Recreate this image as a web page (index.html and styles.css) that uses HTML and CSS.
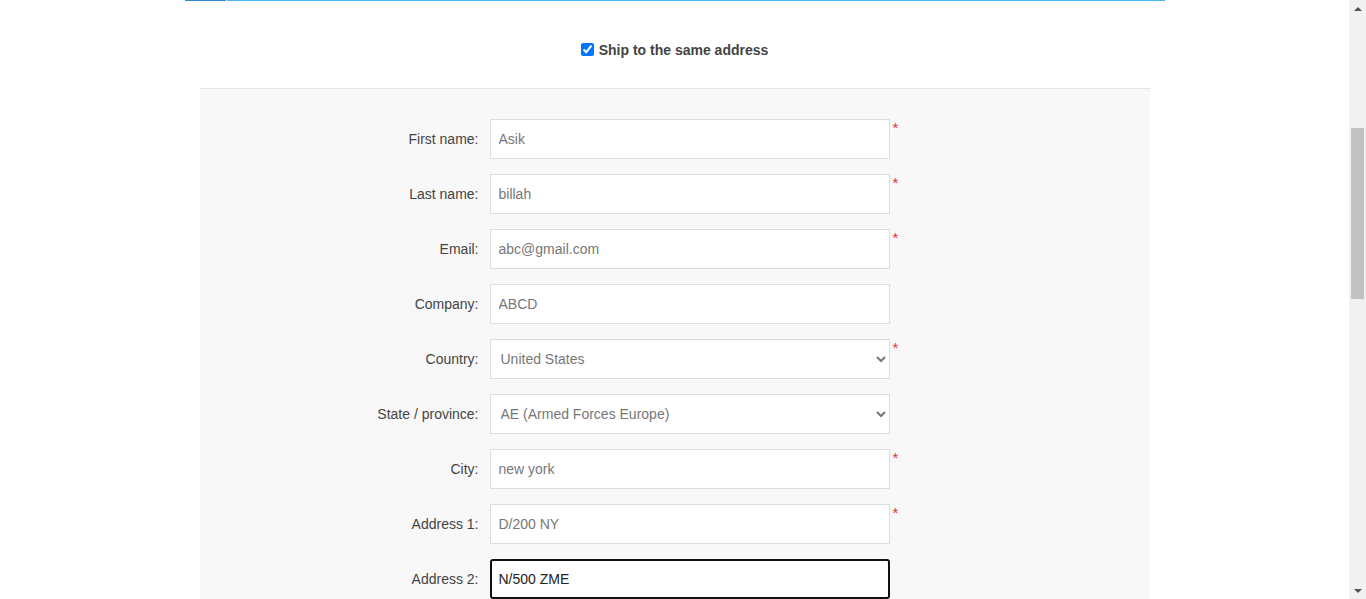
FILE: index.html
```html
<!DOCTYPE html>
<html lang="en">
<head>
<meta charset="utf-8">
<title>Checkout - Shipping address</title>
<link rel="stylesheet" href="styles.css">
</head>
<body>
<div class="page">
  <div class="intro">
    <h1 class="title">Checkout</h1>
  </div>
  <div class="tabbar">
    <div class="tab tab-active"></div>
    <div class="tab tab-rest"></div>
  </div>
  <div class="ship">
    <input type="checkbox" id="same" class="ship-check" checked>
    <label for="same" class="ship-label">Ship to the same address</label>
  </div>
  <div class="section">
    <div class="row">
      <label class="lbl">First name:</label>
      <input class="field" type="text" value="Asik">
      <span class="req">*</span>
    </div>
    <div class="row">
      <label class="lbl">Last name:</label>
      <input class="field" type="text" value="billah">
      <span class="req">*</span>
    </div>
    <div class="row">
      <label class="lbl">Email:</label>
      <input class="field" type="text" value="abc@gmail.com">
      <span class="req">*</span>
    </div>
    <div class="row">
      <label class="lbl">Company:</label>
      <input class="field" type="text" value="ABCD">
    </div>
    <div class="row">
      <label class="lbl">Country:</label>
      <select class="field select"><option>United States</option></select>
      <span class="req">*</span>
    </div>
    <div class="row">
      <label class="lbl">State / province:</label>
      <select class="field select"><option>AE (Armed Forces Europe)</option></select>
    </div>
    <div class="row">
      <label class="lbl">City:</label>
      <input class="field" type="text" value="new york">
      <span class="req">*</span>
    </div>
    <div class="row">
      <label class="lbl">Address 1:</label>
      <input class="field" type="text" value="D/200 NY">
      <span class="req">*</span>
    </div>
    <div class="row">
      <label class="lbl">Address 2:</label>
      <input class="field focused" type="text" value="N/500 ZME">
    </div>
    <div class="row">
      <label class="lbl">Zip / postal code:</label>
      <input class="field" type="text" value="10001">
      <span class="req">*</span>
    </div>
    <div class="row">
      <label class="lbl">Phone number:</label>
      <input class="field" type="text" value="0123456789">
      <span class="req">*</span>
    </div>
    <div class="row">
      <label class="lbl">Fax number:</label>
      <input class="field" type="text" value="">
    </div>
  </div>
</div>
<div class="scrollbar" aria-hidden="true">
  <div class="sb-arrow sb-up"></div>
  <div class="sb-track"><div class="sb-thumb"></div></div>
  <div class="sb-arrow sb-down"></div>
</div>
<script src="script.js"></script>
</body>
</html>
```

FILE: styles.css
```css
html, body {
  margin: 0;
  padding: 0;
  background: #ffffff;
  font-family: "Liberation Sans", Arial, sans-serif;
  font-size: 14px;
  color: #444444;
}

body {
  min-height: 1990px;
  padding-right: 17px;
}

.page {
  width: 980px;
  margin: 0 auto;
}

.intro {
  height: 391px;
  display: flex;
  align-items: flex-end;
}

.title {
  margin: 0 0 40px;
  font-size: 30px;
  font-weight: normal;
  color: #444444;
}

.tabbar {
  display: flex;
  height: 1px;
}

.tab-active {
  width: 41px;
  background: #2a8ccc;
}

.tab-rest {
  flex: 1;
  margin-left: 1px;
  background: #4ab4f4;
}

.ship {
  height: 87px;
  box-sizing: border-box;
  padding-top: 10px;
  display: flex;
  align-items: center;
  justify-content: center;
}

.ship-check {
  width: 13px;
  height: 13px;
  margin: 0 5px 0 0;
}

.ship-label {
  font-weight: bold;
  font-size: 14px;
  color: #444444;
}

.section {
  margin: 0 15px;
  border-top: 1px solid #e3e3e3;
  background: #f8f8f8;
  padding: 30px 0 40px;
}

.row {
  display: flex;
  align-items: flex-start;
  height: 40px;
  margin-bottom: 15px;
}

.lbl {
  width: 290px;
  padding-right: 11px;
  box-sizing: border-box;
  text-align: right;
  line-height: 40px;
  color: #444444;
  flex: none;
}

.field {
  width: 400px;
  height: 40px;
  box-sizing: border-box;
  border: 1px solid #dddddd;
  border-radius: 0;
  background: #ffffff;
  padding: 0 8px;
  font-family: "Liberation Sans", Arial, sans-serif;
  font-size: 14px;
  color: #777777;
  outline: none;
  margin: 0;
  flex: none;
}

.select {
  padding: 0 6px;
}

.focused {
  border: 2px solid #111111;
  border-radius: 3px;
  padding: 0 7px;
  color: #222222;
}

.req {
  margin-left: 3px;
  margin-top: 1px;
  color: #e4312f;
  font-size: 15px;
  line-height: 15px;
}

.scrollbar {
  position: fixed;
  top: 0;
  right: 0;
  bottom: 0;
  width: 17px;
  background: #f1f1f1;
  display: flex;
  flex-direction: column;
  z-index: 10;
}

.sb-arrow {
  height: 17px;
  flex: none;
  display: flex;
  align-items: center;
  justify-content: center;
}

.sb-up::before {
  content: "";
  border-left: 4px solid transparent;
  border-right: 4px solid transparent;
  border-bottom: 4px solid #505050;
}

.sb-down::before {
  content: "";
  border-left: 4px solid transparent;
  border-right: 4px solid transparent;
  border-top: 4px solid #505050;
}

.sb-track {
  flex: 1;
  padding: 0 2px;
}

.sb-thumb {
  margin-top: 111px;
  height: 171px;
  background: #c1c1c1;
}
```

FILE: script.js
```js
window.scrollTo(0, 391);
window.addEventListener('load', function () {
  window.scrollTo(0, 391);
});
```
